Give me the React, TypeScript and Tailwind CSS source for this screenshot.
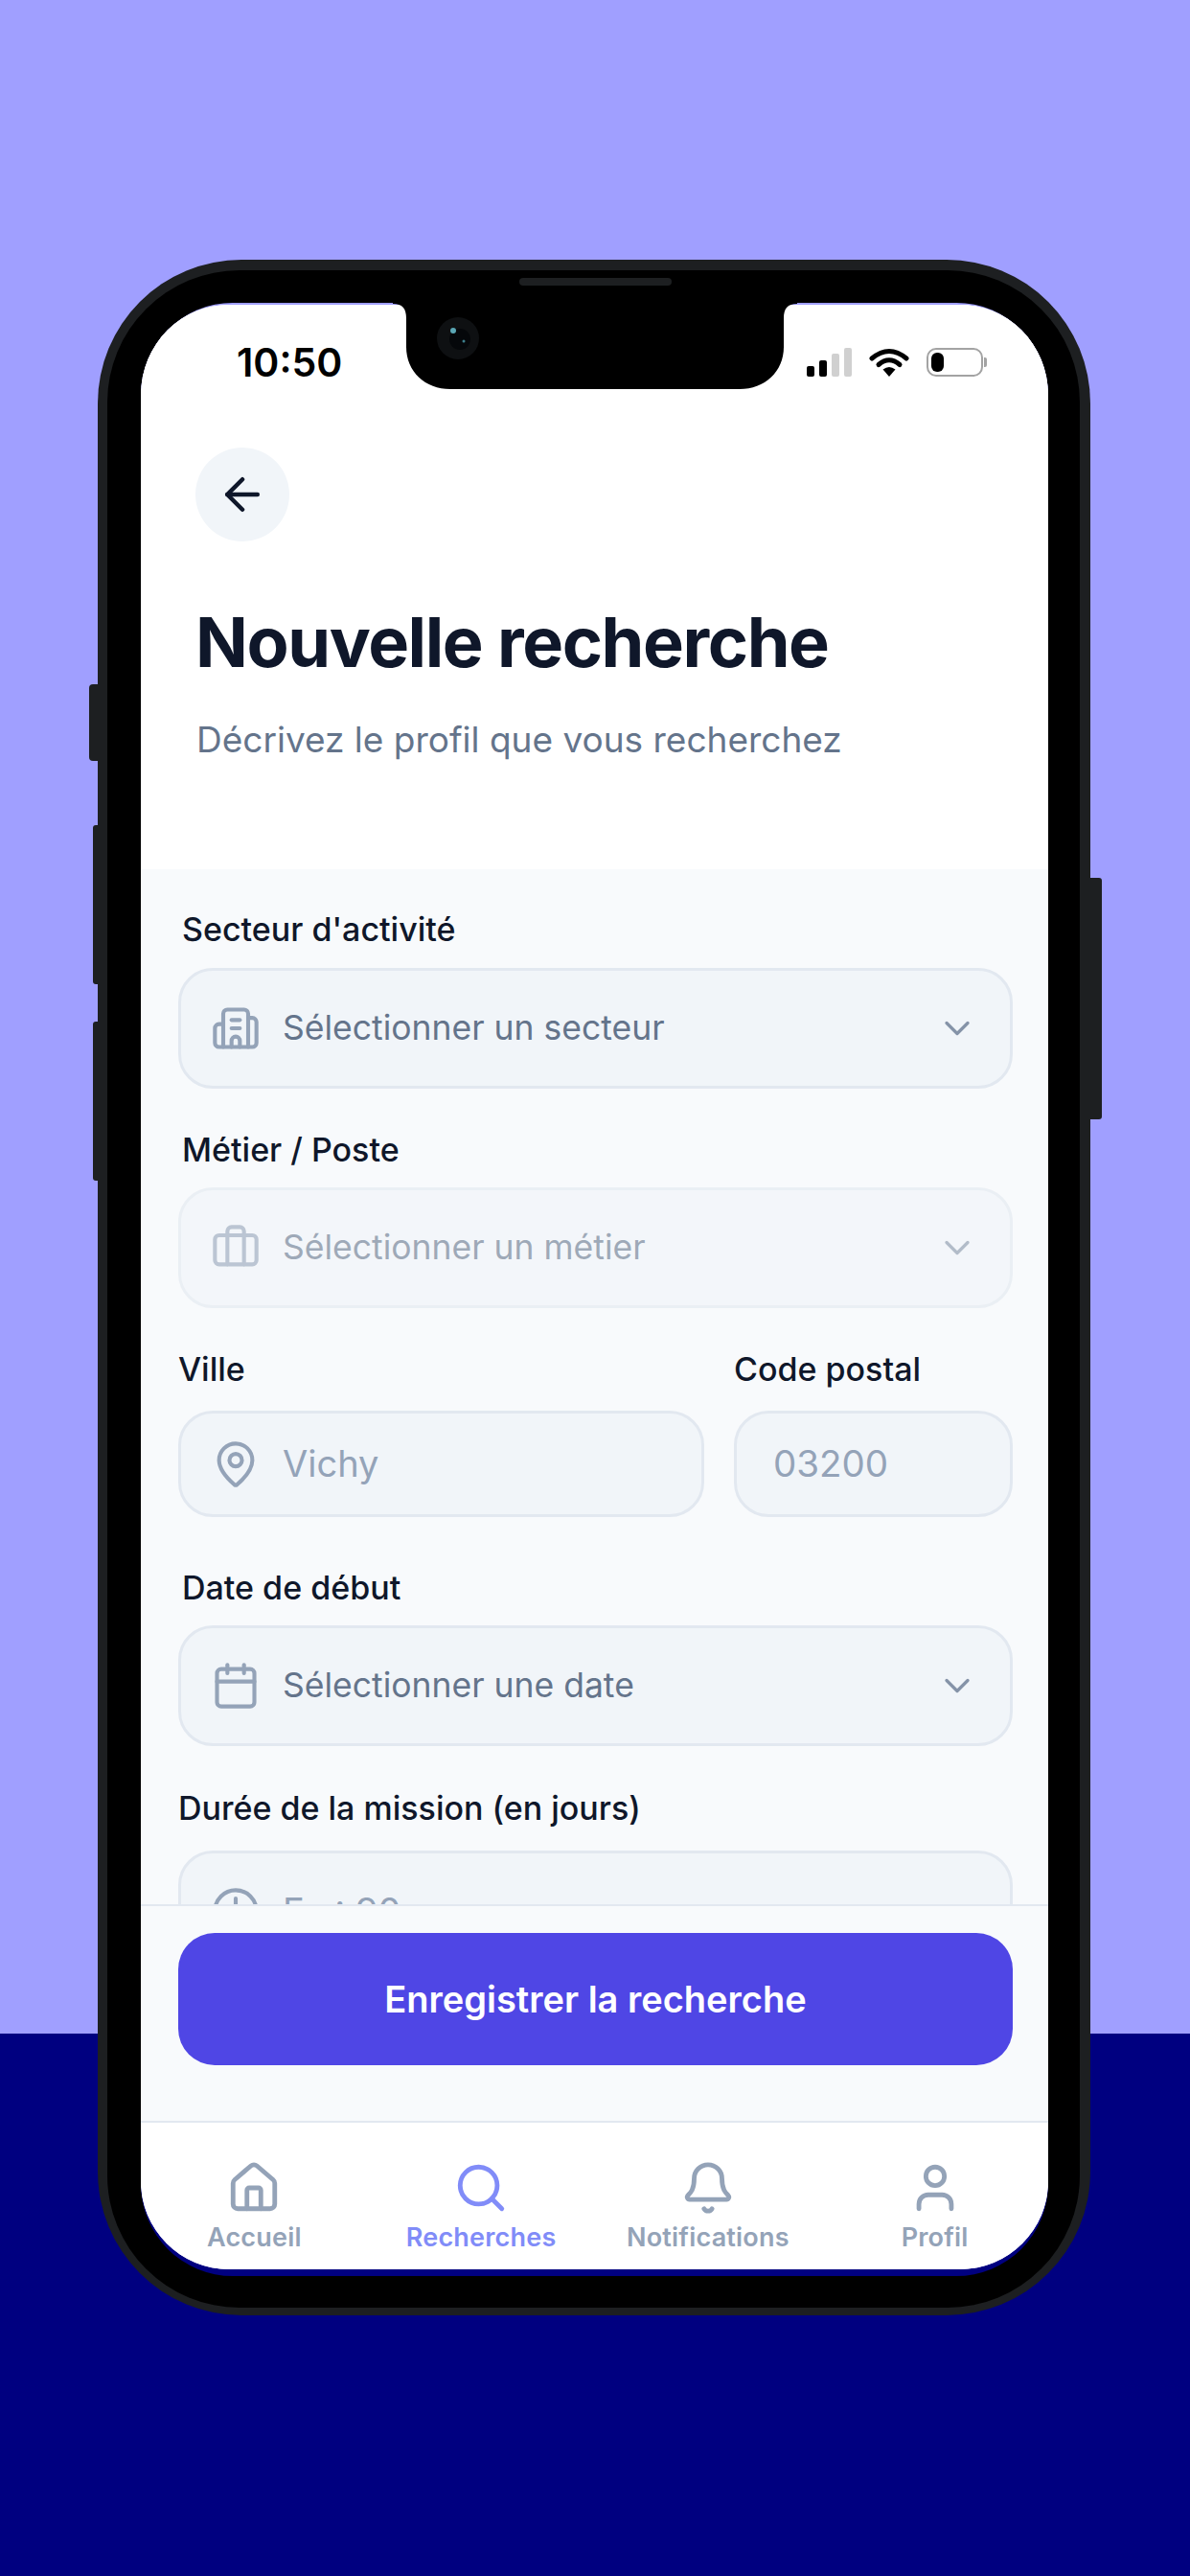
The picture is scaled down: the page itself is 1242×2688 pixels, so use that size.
import React from 'react';
import {
  ArrowLeft, Bell, Briefcase, Building2, Calendar, ChevronDown, Clock, House, MapPin, Search, User,
} from 'lucide-react';

const Label = ({ text, className = '' }: { text: string; className?: string }) => (
  <div className={`h-[40px] text-[34px] leading-[40px] font-medium text-[#0f172a] ${className}`}>{text}</div>
);

const SelectBox = ({ icon: Icon, text, muted = false }: { icon: React.ElementType; text: string; muted?: boolean }) => (
  <div className={`h-[126px] rounded-[36px] border-[3px] border-[#e2e8f0] bg-[#f1f5f9] pl-[31px] pr-[33px] flex items-center ${muted ? 'opacity-60' : ''}`}>
    <Icon size={52} strokeWidth={1.9} className="text-[#94a3b8] shrink-0" />
    <span className="ml-[23px] flex-1 text-[35.5px] text-[#64748b]">{text}</span>
    <ChevronDown size={44} strokeWidth={1.8} className="text-[#8593a8] shrink-0" />
  </div>
);

const NavItem = ({ icon: Icon, label, active = false }: { icon: React.ElementType; label: string; active?: boolean }) => (
  <div className={`flex-1 flex flex-col items-center ${active ? 'text-[#818cf8]' : 'text-[#94a3b8]'}`}>
    <Icon size={58} strokeWidth={2} />
    <span className="mt-[5px] text-[27px] leading-[36px] font-semibold tracking-[0.2px]">{label}</span>
  </div>
);

const StatusIcons = () => (
  <div className="flex items-center">
    <div className="flex items-end gap-[5px] h-[30px]">
      <div className="w-[8px] h-[11px] rounded-[2px] bg-black" />
      <div className="w-[8px] h-[17px] rounded-[2px] bg-black" />
      <div className="w-[8px] h-[24px] rounded-[2px] bg-[#d0d0d0]" />
      <div className="w-[8px] h-[30px] rounded-[2px] bg-[#d0d0d0]" />
    </div>
    <svg width="42" height="30" viewBox="0 0 42 30" className="ml-[18px]">
      <path d="M3 11 Q21 -4 39 11" fill="none" stroke="#000" strokeWidth="5" strokeLinecap="round" />
      <path d="M10 17.5 Q21 8 32 17.5" fill="none" stroke="#000" strokeWidth="5" strokeLinecap="round" />
      <path d="M21 30 L14.5 22.5 Q21 17.5 27.5 22.5 Z" fill="#000" />
    </svg>
    <div className="ml-[18px] w-[59px] h-[30px] rounded-[10px] border-[2px] border-[#a3a3a3] p-[3px] flex">
      <div className="w-[13px] h-full rounded-[6px] bg-black" />
    </div>
    <div className="ml-[1px] w-[3px] h-[10px] rounded-r-[2px] bg-[#a3a3a3]" />
  </div>
);

export default function App() {
  return (
    <div className="w-[1242px] h-[2688px] pt-[271px] pl-[102px] overflow-hidden font-[Inter,sans-serif] bg-[linear-gradient(#a09fff_2122px,#000080_2122px)]">
      <div className="relative w-[1036px] h-[2145px] rounded-[150px] bg-[#1d1f21] pt-[11px] pl-[10px] pr-[11px] pb-[8px]">
        {/* side buttons */}
        <div className="absolute left-[-9px] top-[443px] w-[9px] h-[80px] rounded-l-[4px] bg-[#1d1f21]" />
        <div className="absolute left-[-5px] top-[590px] w-[5px] h-[166px] rounded-l-[3px] bg-[#1d1f21]" />
        <div className="absolute left-[-5px] top-[795px] w-[5px] h-[166px] rounded-l-[3px] bg-[#1d1f21]" />
        <div className="absolute right-[-12px] top-[645px] w-[12px] h-[252px] rounded-r-[3px] bg-[#1d1f21]" />

        <div className="relative w-full h-full rounded-[138px] bg-black pt-[34px] pl-[35px] pr-[33px] pb-[33px]">
          {/* speaker */}
          <div className="absolute left-[430px] top-[8px] w-[159px] h-[8px] rounded-full bg-[#1d1f21]" />

          <div className="relative w-full h-full rounded-[96px] overflow-hidden bg-[linear-gradient(#a09fff_1806px,#000080_1806px)]">
            <div className="mt-[2px] w-full h-[2050px] rounded-[92px] overflow-hidden bg-white flex flex-col">
              {/* header */}
              <div className="h-[589px] bg-white shrink-0">
                <div className="pt-[40px] pl-[100px] pr-[64px] flex items-center justify-between h-[80px]">
                  <span className="text-[41px] leading-[40px] font-semibold text-black">10:50</span>
                  <StatusIcons />
                </div>
                <div className="mt-[69px] ml-[57px] w-[98px] h-[98px] rounded-full bg-[#f1f5f9] flex items-center justify-center">
                  <ArrowLeft size={54} strokeWidth={2} className="text-[#0f172a]" />
                </div>
                <h1 className="mt-[63px] ml-[57px] text-[72px] leading-[84px] font-bold tracking-[-1.4px] text-[#0f172a]">Nouvelle recherche</h1>
                <p className="mt-[32px] ml-[58px] text-[37px] leading-[56px] text-[#64748b]">Décrivez le profil que vous recherchez</p>
              </div>

              {/* form */}
              <div className="flex-1 min-h-0 overflow-hidden bg-[#f8fafc] pl-[39px] pr-[37px] pt-[43px]">
                <Label text="Secteur d'activité" className="ml-[4px] mb-[20px]" />
                <SelectBox icon={Building2} text="Sélectionner un secteur" />

                <Label text="Métier / Poste" className="ml-[4px] mt-[44px] mb-[19px]" />
                <SelectBox icon={Briefcase} text="Sélectionner un métier" muted />

                <div className="mt-[44px] flex gap-[31px]">
                  <div className="flex-1">
                    <Label text="Ville" className="mb-[23px]" />
                    <div className="h-[111px] rounded-[36px] border-[3px] border-[#e2e8f0] bg-[#f1f5f9] pl-[31px] flex items-center">
                      <MapPin size={52} strokeWidth={1.9} className="text-[#94a3b8] shrink-0" />
                      <span className="ml-[23px] text-[38px] text-[#94a3b8]">Vichy</span>
                    </div>
                  </div>
                  <div className="w-[291px]">
                    <Label text="Code postal" className="mb-[23px]" />
                    <div className="h-[111px] rounded-[36px] border-[3px] border-[#e2e8f0] bg-[#f1f5f9] pl-[38px] flex items-center">
                      <span className="text-[38.5px] text-[#94a3b8]">03200</span>
                    </div>
                  </div>
                </div>

                <Label text="Date de début" className="ml-[4px] mt-[54px] mb-[19px]" />
                <SelectBox icon={Calendar} text="Sélectionner une date" />

                <Label text="Durée de la mission (en jours)" className="mt-[45px] mb-[24px]" />
                <div className="h-[126px] rounded-[36px] border-[3px] border-[#e2e8f0] bg-[#f1f5f9] pl-[31px] flex items-center">
                  <Clock size={52} strokeWidth={1.9} className="text-[#94a3b8] shrink-0" />
                  <span className="ml-[23px] text-[38px] text-[#94a3b8]">Ex : 90</span>
                </div>
              </div>

              {/* footer action */}
              <div className="h-[226px] shrink-0 bg-[#f8fafc] border-t-[2px] border-[#e2e8f0] pl-[39px] pr-[37px] pt-[28px]">
                <button className="w-full h-[138px] rounded-[38px] bg-[#4f46e5] text-white text-[38px] font-semibold">
                  Enregistrer la recherche
                </button>
              </div>

              {/* bottom nav */}
              <div className="h-[155px] shrink-0 bg-white border-t-[2px] border-[#e2e8f0] pt-[39px] flex">
                <NavItem icon={House} label="Accueil" />
                <NavItem icon={Search} label="Recherches" active />
                <NavItem icon={Bell} label="Notifications" />
                <NavItem icon={User} label="Profil" />
              </div>
            </div>

            {/* notch */}
            <svg width="422" height="90" viewBox="0 0 422 90" className="absolute left-[263px] top-0">
              <path d="M0 0H422V1C412 1 408 6 408 16V46C408 72 388 90 362 90H60C34 90 14 72 14 46V16C14 6 10 1 0 1Z" fill="#000" />
              <circle cx="68" cy="37" r="22" fill="#0e1012" />
              <circle cx="70" cy="38" r="11" fill="#05070a" />
              <circle cx="63" cy="29" r="3" fill="#5aa6b4" />
              <circle cx="74" cy="40" r="1.5" fill="#3d7f8c" />
            </svg>
          </div>
        </div>
      </div>
    </div>
  );
}
